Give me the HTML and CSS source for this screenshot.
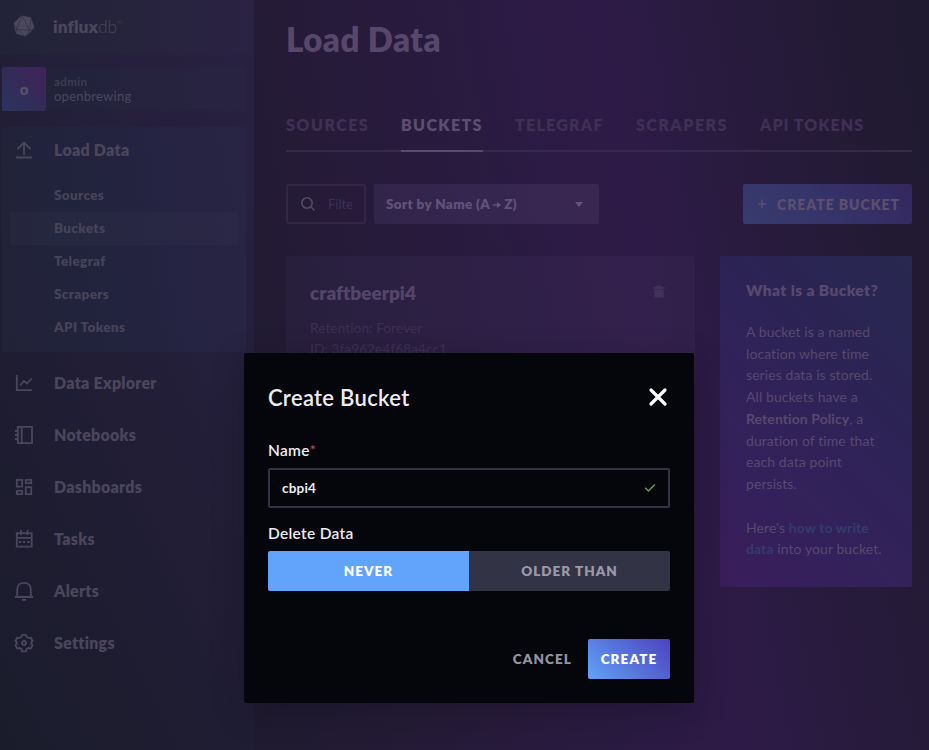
FILE: index.html
```
<!DOCTYPE html>
<html lang="en">
<head>
<meta charset="utf-8">
<title>Load Data | InfluxDB</title>
<link rel="stylesheet" href="styles.css">
</head>
<body>
<div class="app">
  <nav class="sidebar">
    <div class="brand">
      <svg class="brand-icon" width="22" height="22" viewBox="0 0 22 22"><path class="gem" d="M8.5.5 18 2.5 21.5 13 12.500 21.500 3 18.500.5 8.500z"/><path class="facets" d="M9 .5 3.500 14 16.500 15.500zM.5 8.500 3.500 14 3 18.500M18 2.500 16.500 15.500 21.500 13M16.500 15.500 12.500 21.500 3.500 14"/></svg>
      <span class="brand-name"><b>influx</b>db<sup>™</sup></span>
    </div>
    <div class="user">
      <div class="avatar">o</div>
      <div class="user-text"><span class="user-name">admin</span><span class="user-org">openbrewing</span></div>
    </div>
    <div class="group">
      <a class="item"><svg width="20" height="20" viewBox="0 0 20 20"><path d="M2 17.500H18M10 15V3M3.500 9 10 2.500 16.500 9"/></svg><span>Load Data</span></a>
      <div class="subs">
        <a class="sub"><span>Sources</span></a>
        <a class="sub active"><span>Buckets</span></a>
        <a class="sub"><span>Telegraf</span></a>
        <a class="sub"><span>Scrapers</span></a>
        <a class="sub"><span>API Tokens</span></a>
      </div>
    </div>
    <div class="items">
      <a class="item"><svg width="20" height="20" viewBox="0 0 20 20"><path d="M2.800 2V17.200H18M6 12.500 10 8 13 10.500 17.700 5.500"/></svg><span>Data Explorer</span></a>
      <a class="item"><svg width="20" height="20" viewBox="0 0 20 20"><path d="M3.800 1.800H18V18.200H3.800zM7.700 2V18M1 6H4M1 10H4M1 14H4"/></svg><span>Notebooks</span></a>
      <a class="item"><svg width="20" height="20" viewBox="0 0 20 20"><path d="M2.800 2.800H8.200V9.700H2.800zM11.800 2.800H17.200V6.200H11.800zM2.800 13.800H8.200V17.200H2.800zM11.800 10.200H17.200V17.200H11.800z"/></svg><span>Dashboards</span></a>
      <a class="item"><svg width="20" height="20" viewBox="0 0 20 20"><path d="M2.800 4.200H17.700V17.700H2.800zM3 8.800H17.500M7 1V6M13.500 1V6M5 13H7.300M9 13H11.300M13.300 13H15.600"/></svg><span>Tasks</span></a>
      <a class="item"><svg width="20" height="20" viewBox="0 0 20 20"><path d="M1 16H19M3.200 16V8.500C3.200 4 6 1.800 10 1.800S16.800 4 16.800 8.500V16M8 18.800H12"/></svg><span>Alerts</span></a>
      <a class="item"><svg width="20" height="20" viewBox="0 0 20 20"><path d="M8 1.800H12L12.600 4 14.600 5.100 16.800 4.600 18.500 8 17 10 18.500 12.200 16.700 15.500 14.400 15 12.600 16 12 18.300H8L7.400 16 5.600 15 3.300 15.500 1.500 12.200 3 10 1.500 8 3.200 4.600 5.400 5.100 7.400 4z"/><circle cx="10" cy="10" r="2"/></svg><span>Settings</span></a>
    </div>
  </nav>
  <main class="main">
    <h1>Load Data</h1>
    <div class="tabs">
      <a class="tab tab-sources">Sources</a><a class="tab tab-buckets current">Buckets</a><a class="tab tab-telegraf">Telegraf</a><a class="tab tab-scrapers">Scrapers</a><a class="tab tab-tokens">API Tokens</a>
    </div>
    <div class="toolbar">
      <div class="search"><svg width="16" height="16" viewBox="0 0 16 16"><circle cx="7" cy="7" r="5.200"/><path d="M11 11 14.500 14.500"/></svg><span>Filte</span></div>
      <div class="sort"><span>Sort by Name (A</span><svg class="arrow" width="8" height="8" viewBox="0 0 8 8"><path d="M0 3.200H4V1L8 4 4 7V4.800H0z"/></svg><span>Z)</span><i class="caret"></i></div>
      <div class="create-bucket"><svg width="10" height="10" viewBox="0 0 10 10"><path d="M5 .8V9.200M.8 5H9.200"/></svg><span>Create Bucket</span></div>
    </div>
    <div class="content">
      <section class="card">
        <div class="card-head"><h2>craftbeerpi4</h2><svg width="12" height="13" viewBox="0 0 12 13"><path d="M.3 2H3.500V.5H8.500V2H11.700V4H.3zM1.300 4.500H10.700V12.500H1.300z"/></svg></div>
        <p>Retention: Forever</p>
        <p>ID: 3fa962e4f68a4cc1</p>
      </section>
      <aside class="panel">
        <h3>What is a Bucket?</h3>
        <p>A bucket is a named<br>location where time<br>series data is stored.<br>All buckets have a<br><b>Retention Policy</b>, a<br>duration of time that<br>each data point<br>persists.</p>
        <p>Here's <a>how to write<br>data</a> into your bucket.</p>
      </aside>
    </div>
  </main>
</div>
<div class="modal">
  <header><h4>Create Bucket</h4><svg width="20" height="20" viewBox="0 0 20 20"><path d="M3 3 17 17M17 3 3 17"/></svg></header>
  <label>Name<em>*</em></label>
  <div class="field"><span>cbpi4</span><svg width="12" height="10" viewBox="0 0 12 10"><path d="M1.200 4.800 4.500 8 10.800 1.500"/></svg></div>
  <label>Delete Data</label>
  <div class="toggle"><div class="on">Never</div><div class="off">Older Than</div></div>
  <footer><span class="cancel">Cancel</span><span class="create">Create</span></footer>
</div>
</body>
</html>
```
FILE: styles.css
```
* { box-sizing: border-box; }
body {
  margin: 0;
  width: 929px;
  height: 750px;
  overflow: hidden;
  position: relative;
  font-family: Lato, Roboto, sans-serif;
  font-variant-ligatures: none;
  color: #57486b;
}
h1, h2, h3, h4, p { margin: 0; }
svg { flex: none; fill: none; stroke: currentColor; }
.app {
  display: flex;
  height: 750px;
  background: linear-gradient(79deg, #1e1b2d 20%, #241b37 38%, #2e1a47 69%, #281b3e 79%, #1f1a2f 99%);
}

/* Sidebar */
.sidebar {
  width: 254px;
  flex: none;
  background: linear-gradient(63deg, #1a1c2b 0%, #1f1d32 35%, #241f3b 65%, #292142 100%);
  color: #4a465c;
}
.brand {
  height: 55px;
  padding: 0 13px;
  display: flex;
  align-items: center;
  gap: 18px;
  background: linear-gradient(90deg, #222338, #2a2342);
}
.brand-icon { margin-bottom: 3px; }
.gem { fill: #4b485c; stroke: none; }
.facets { stroke: #2c2a40; stroke-width: .6; }
.brand-name { font-size: 17.500px; font-weight: 300; margin-bottom: 3px; }
.brand-name b { font-weight: 800; }
.brand-name sup { font-size: 6px; vertical-align: 8px; line-height: 0; }
.user {
  margin: 12px 8px 0 2px;
  height: 44px;
  display: flex;
  background: linear-gradient(90deg, #21223a, #282341);
}
.avatar {
  width: 44px;
  border-radius: 2px;
  display: flex;
  align-items: center;
  justify-content: center;
  font-size: 15px;
  font-weight: 800;
  color: #5a5069;
  background: linear-gradient(45deg, #2a355d, #352a58 55%, #42235a);
}
.user-text { display: flex; flex-direction: column; padding: 8px 0 0 8px; }
.user-name { font-size: 11.500px; line-height: 14px; font-weight: 700; letter-spacing: .4px; color: #3f3b51; }
.user-org { font-size: 13px; line-height: 15px; letter-spacing: .25px; color: #4b475d; }
.group {
  margin: 16px 8px 0 2px;
  height: 225px;
  background: linear-gradient(80deg, #212238, #232340 55%, #292444);
}
.item {
  height: 52px;
  padding-left: 14px;
  display: flex;
  align-items: center;
  gap: 20px;
  font-size: 16px;
  font-weight: 800;
  letter-spacing: .25px;
}
.item svg { stroke-width: 1.8; }
.items .item span, .sub span { margin-bottom: 2px; }
.group .item { height: 45px; padding-left: 12px; }
.subs { padding: 7px 8px 0; }
.sub {
  display: flex;
  align-items: center;
  height: 33px;
  padding-left: 44px;
  font-size: 13.500px;
  font-weight: 800;
  letter-spacing: .35px;
  color: #46435a;
}
.sub.active { background: rgba(70, 66, 90, .13); }
.items { padding-top: 5px; }

/* Main column */
.main { flex: 1; padding: 0 17px 0 32px; }
h1 { font-size: 33px; line-height: 40px; padding-top: 19px; font-weight: 800; letter-spacing: .45px; color: #57486b; }
.tabs {
  height: 54px;
  margin-top: 39px;
  display: flex;
  gap: 32px;
  border-bottom: 2px solid #352a4a;
  font-size: 16px;
  font-weight: 800;
  text-transform: uppercase;
  letter-spacing: 1.500px;
  color: #3f3054;
}
.tab { height: 54px; line-height: 53px; white-space: nowrap; }
.tab-sources { width: 83px; }
.tab-buckets { width: 82px; letter-spacing: 1.350px; }
.tab-telegraf { width: 89px; letter-spacing: 1.250px; }
.tab-scrapers { width: 92px; }
.tab-tokens { letter-spacing: 1px; }
.current { color: #5c4e70; border-bottom: 2px solid #5a4a6e; }
.toolbar { margin-top: 32px; display: flex; height: 40px; }
.search {
  width: 80px;
  border: 2px solid #322545;
  border-radius: 2px;
  padding: 0 12px;
  display: flex;
  align-items: center;
  gap: 12px;
  overflow: hidden;
  font-size: 13px;
  color: #3f3153;
}
.search svg { color: #584969; stroke-width: 1.600; }
.search span { width: 25px; overflow: hidden; white-space: nowrap; }
.sort {
  width: 225px;
  margin-left: 8px;
  padding: 0 16px 0 12px;
  display: flex;
  align-items: center;
  border-radius: 2px;
  background: linear-gradient(79deg, #30254a, #3a2753);
  font-size: 13.500px;
  font-weight: 800;
  letter-spacing: .35px;
  color: #62537a;
}
.arrow { fill: currentColor; stroke: none; margin: 1px 3px 0; }
.caret { margin-left: auto; border: 4.500px solid transparent; border-top: 5px solid #62537a; border-bottom: 0; }
.create-bucket {
  margin-left: auto;
  width: 169px;
  border-radius: 2px;
  display: flex;
  align-items: center;
  gap: 10px;
  padding-left: 14px;
  background: linear-gradient(45deg, #373b6d, #36346a 45%, #33275f);
  color: #5c4f70;
  font-size: 14px;
  font-weight: 800;
  text-transform: uppercase;
  letter-spacing: .95px;
  white-space: nowrap;
}
.create-bucket svg { stroke-width: 1.500; }
.content { margin-top: 32px; display: flex; justify-content: space-between; align-items: flex-start; }
.card {
  width: 409px;
  height: 130px;
  padding: 24px;
  border-radius: 2px;
  background: linear-gradient(79deg, #271f3c, #2d2045 45%, #34204d 85%, #30204a);
  font-size: 13.500px;
  letter-spacing: .15px;
  color: #3f3153;
}
.card-head { display: flex; justify-content: space-between; align-items: center; height: 26px; padding-right: 6px; }
.card-head svg { fill: #423158; stroke: none; margin-bottom: 3px; }
h2 { font-size: 19px; font-weight: 800; letter-spacing: 0; margin-bottom: 2px; color: #54456a; }
.card p { line-height: 21px; }
.card-head + p { margin-top: 12px; }
.panel {
  width: 192px;
  height: 331px;
  padding: 24px 20px 0 26px;
  border-radius: 2px;
  background: linear-gradient(45deg, #3a1d5c, #31225a 40%, #2b2453 72%, #282850);
  font-size: 14px;
  line-height: 21.700px;
  letter-spacing: .08px;
  color: #57496f;
  white-space: nowrap;
}
h3 { font-size: 15.500px; line-height: 20px; font-weight: 800; letter-spacing: .4px; margin-bottom: 21px; }
.panel p + p { margin-top: 22px; }
.panel a { color: #353b70; font-weight: 700; }

/* Dialog */
.modal {
  position: absolute;
  left: 244px;
  top: 353px;
  width: 450px;
  height: 350px;
  padding: 0 24px;
  border-radius: 2px;
  background: #05060b;
  box-shadow: 0 8px 32px rgba(12, 12, 20, .3);
  color: #ececf0;
}
.modal header { height: 88px; display: flex; align-items: center; justify-content: space-between; padding-right: 2px; }
h4 { font-size: 22px; font-weight: 600; letter-spacing: .3px; }
.modal header svg { color: #fff; stroke-width: 3.200; stroke-linecap: round; }
label { display: block; margin-top: -1px; font-size: 15.500px; line-height: 20px; font-weight: 600; letter-spacing: .3px; }
em { font-style: normal; font-size: 14px; line-height: 0; vertical-align: 1px; color: #bf4e47; }
.field {
  margin: 8px 0 16px;
  height: 40px;
  border: 2px solid #333346;
  border-radius: 2px;
  padding: 0 12px;
  display: flex;
  align-items: center;
  justify-content: space-between;
  font-size: 13.500px;
  font-weight: 700;
  letter-spacing: .2px;
}
.field svg { color: #5f9f50; stroke-width: 1.500; }
.toggle {
  margin-top: 8px;
  height: 40px;
  display: flex;
  border-radius: 2px;
  overflow: hidden;
  font-size: 13.500px;
  font-weight: 800;
  text-transform: uppercase;
  letter-spacing: 1px;
}
.toggle div { width: 201px; text-align: center; line-height: 41px; }
.on { background: #62a3fb; color: #fff; }
.off { background: #333346; color: #9a9aab; }
footer {
  margin-top: 48px;
  height: 40px;
  display: flex;
  justify-content: flex-end;
  gap: 16px;
  line-height: 41px;
  font-size: 13.500px;
  font-weight: 800;
  text-transform: uppercase;
  letter-spacing: 1.100px;
}
.cancel { color: #9393a5; }
.create { width: 82px; text-align: center; border-radius: 2px; color: #fff; background: linear-gradient(45deg, #62a3fb, #5671d8 50%, #4d42c2); }
```
